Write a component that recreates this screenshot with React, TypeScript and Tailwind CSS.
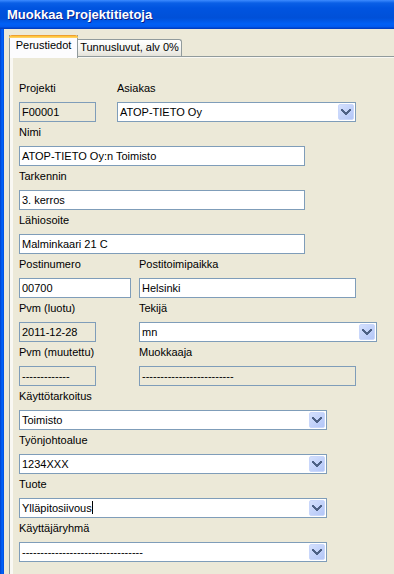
import React from 'react';

function Chevron() {
  return (
    <svg width="16" height="16" viewBox="0 0 16 16" shapeRendering="crispEdges">
      <polyline points="4,6 8,10 12,6" fill="none" stroke="#4d6185" strokeWidth="2" strokeLinecap="square" />
    </svg>
  );
}

function Label({ children }: { children: React.ReactNode }) {
  return <div className="h-6 leading-5 text-[11px] text-black whitespace-nowrap">{children}</div>;
}

function TextBox({ value, width, disabled, caret }: { value: string; width: string; disabled?: boolean; caret?: boolean }) {
  return (
    <div
      className={`${width} h-5 border border-[#7f9db9] pl-[2px] leading-[18px] text-[11px] text-black whitespace-nowrap overflow-hidden ${
        disabled ? 'bg-[#ece9d8]' : 'bg-white'
      }`}
    >
      {value}
      {caret && <span className="inline-block w-px h-[13px] bg-black align-[-2px]" />}
    </div>
  );
}

function ComboBox({ value, width, caret }: { value: string; width: string; caret?: boolean }) {
  return (
    <div className={`${width} flex h-5 border border-[#7f9db9] bg-white`}>
      <div className="flex-1 pl-[2px] leading-[18px] text-[11px] text-black whitespace-nowrap overflow-hidden">
        {value}
        {caret && <span className="inline-block w-px h-[13px] bg-black align-[-2px]" />}
      </div>
      <div className="m-px flex h-4 w-4 items-center justify-center rounded-[2px] border border-[#c9d7fb] bg-[linear-gradient(135deg,#d4e0fd,#b3c6f7)]">
        <div className="-m-px">
          <Chevron />
        </div>
      </div>
    </div>
  );
}

export default function App() {
  return (
    <div className="w-[394px] h-[574px] overflow-hidden bg-[#ece9d8] font-['Liberation_Sans',Arial,sans-serif]">
      {/* title bar */}
      <div className="h-[29px] bg-[linear-gradient(to_bottom,#3d8bff_0px,#0a5fe6_3px,#0054e0_8px,#0050d8_18px,#0060f6_24px,#0059ee_27px,#003fc4_28px)] pl-[7px] leading-[30px] text-[13px] font-bold text-white [text-shadow:1px_1px_#0a1e8a]">
        Muokkaa Projektitietoja
      </div>

      <div className="flex h-[545px]">
        {/* left window border */}
        <div className="w-[4px] bg-[linear-gradient(to_right,#003fc8,#0058ee,#0062f8,#0048dc)]" />

        <div className="flex-1 pl-[5px] pt-[6px]">
          {/* tabs */}
          <div className="flex h-[21px] items-end">
            <div className="relative z-10 -mb-[2px] h-[23px] w-[69px] border-x border-[#919b9c] bg-[#fcfcfe]">
              <div className="h-[3px] rounded-t-[3px] bg-[linear-gradient(to_bottom,#e68b2c,#ffc73c,#ffd67a)] -mx-px" />
              <div className="pt-[1px] text-center text-[11px] leading-[13px] text-black">Perustiedot</div>
            </div>
            <div className="h-[17px] w-[104px] rounded-tr-[3px] border-t border-r border-[#919b9c] bg-[linear-gradient(to_bottom,#ffffff,#f3f3ef_60%,#e4e2d9)] pt-[1px] text-center text-[11px] leading-[13px] text-black">
              Tunnusluvut, alv 0%
            </div>
          </div>

          {/* panel */}
          <div className="h-full border-t border-l border-[#919b9c] bg-[#f9f8f3]">
            <div className="ml-[3px] mt-px h-full bg-[#ece9d8] pl-[6px] pt-[20px]">
              <div className="flex">
                <div className="w-[98px]">
                  <Label>Projekti</Label>
                  <TextBox value="F00001" width="w-[77px]" disabled />
                </div>
                <div>
                  <Label>Asiakas</Label>
                  <ComboBox value="ATOP-TIETO Oy" width="w-[239px]" />
                </div>
              </div>

              <Label>Nimi</Label>
              <TextBox value="ATOP-TIETO Oy:n Toimisto" width="w-[286px]" />

              <Label>Tarkennin</Label>
              <TextBox value="3. kerros" width="w-[286px]" />

              <Label>Lähiosoite</Label>
              <TextBox value="Malminkaari 21 C" width="w-[286px]" />

              <div className="flex">
                <div className="w-[120px]">
                  <Label>Postinumero</Label>
                  <TextBox value="00700" width="w-[112px]" />
                </div>
                <div>
                  <Label>Postitoimipaikka</Label>
                  <TextBox value="Helsinki" width="w-[217px]" />
                </div>
              </div>

              <div className="flex">
                <div className="w-[120px]">
                  <Label>Pvm (luotu)</Label>
                  <TextBox value="2011-12-28" width="w-[77px]" disabled />
                </div>
                <div>
                  <Label>Tekijä</Label>
                  <ComboBox value="mn" width="w-[238px]" />
                </div>
              </div>

              <div className="flex">
                <div className="w-[120px]">
                  <Label>Pvm (muutettu)</Label>
                  <TextBox value="-------------" width="w-[77px]" disabled />
                </div>
                <div>
                  <Label>Muokkaaja</Label>
                  <TextBox value="-------------------------" width="w-[217px]" disabled />
                </div>
              </div>

              <Label>Käyttötarkoitus</Label>
              <ComboBox value="Toimisto" width="w-[308px]" />

              <Label>Työnjohtoalue</Label>
              <ComboBox value="1234XXX" width="w-[308px]" />

              <Label>Tuote</Label>
              <ComboBox value="Ylläpitosiivous" width="w-[308px]" caret />

              <Label>Käyttäjäryhmä</Label>
              <ComboBox value="---------------------------------" width="w-[308px]" />
            </div>
          </div>
        </div>
      </div>
    </div>
  );
}
